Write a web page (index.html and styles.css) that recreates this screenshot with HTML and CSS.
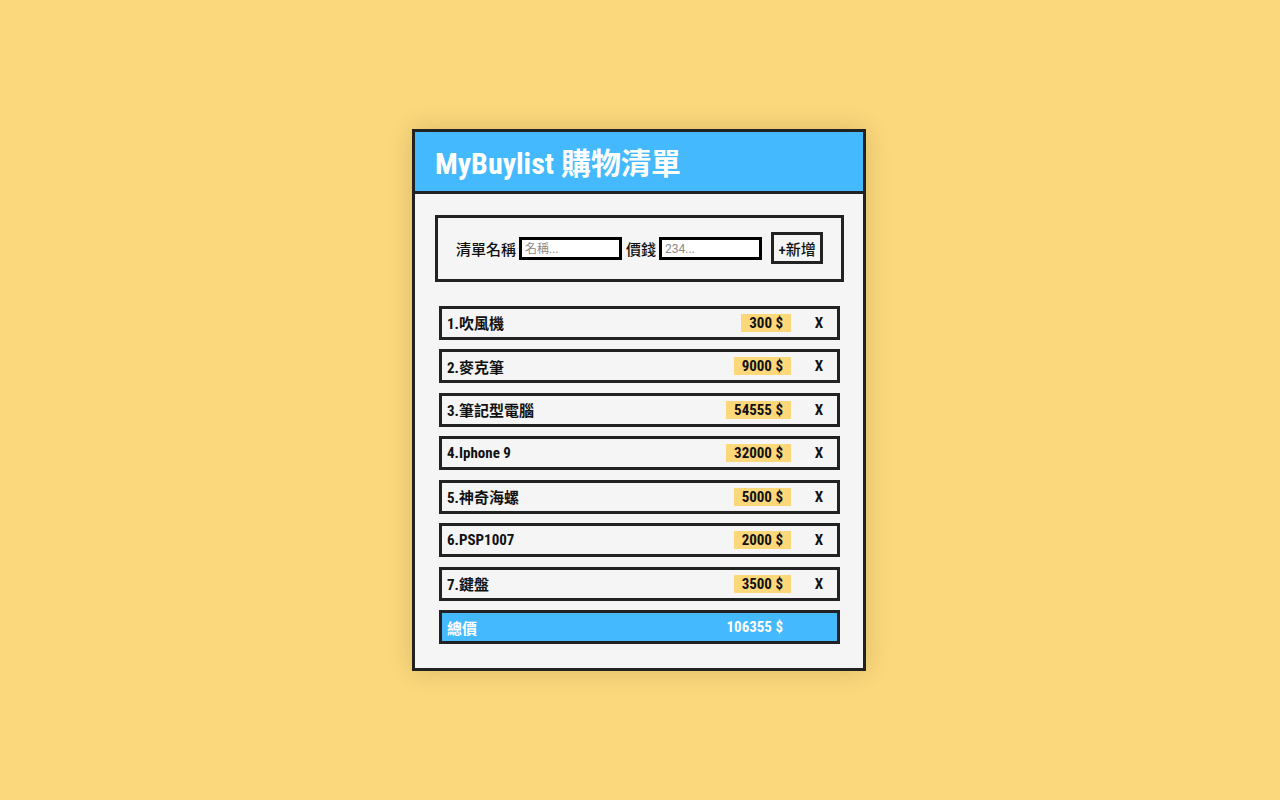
FILE: index.html
```html
<!DOCTYPE html>
<html lang="zh-Hant">
<head>
<meta charset="utf-8">
<title>MyBuylist 購物清單</title>
<link rel="stylesheet" href="styles.css">
</head>
<body>
<div class="stage">
  <div class="card">
    <header class="card-head">
      <h1 class="title">MyBuylist 購物清單</h1>
    </header>
    <main class="card-body">
      <form class="add-form">
        <label class="field-label">清單名稱</label>
        <input class="field-input" type="text" placeholder="名稱...">
        <label class="field-label">價錢</label>
        <input class="field-input" type="text" placeholder="234...">
        <button class="add-btn" type="button">+新增</button>
      </form>
      <ul class="items">
        <li class="item"><span class="item-name">1.吹風機</span><span class="price">300 $</span><span class="remove">X</span></li>
        <li class="item"><span class="item-name">2.麥克筆</span><span class="price">9000 $</span><span class="remove">X</span></li>
        <li class="item"><span class="item-name">3.筆記型電腦</span><span class="price">54555 $</span><span class="remove">X</span></li>
        <li class="item"><span class="item-name">4.Iphone 9</span><span class="price">32000 $</span><span class="remove">X</span></li>
        <li class="item"><span class="item-name">5.神奇海螺</span><span class="price">5000 $</span><span class="remove">X</span></li>
        <li class="item"><span class="item-name">6.PSP1007</span><span class="price">2000 $</span><span class="remove">X</span></li>
        <li class="item"><span class="item-name">7.鍵盤</span><span class="price">3500 $</span><span class="remove">X</span></li>
        <li class="item total"><span class="item-name">總價</span><span class="price">106355 $</span><span class="remove"></span></li>
      </ul>
    </main>
  </div>
</div>
</body>
</html>
```

FILE: styles.css
```css
* { box-sizing: border-box; }
html, body { margin: 0; padding: 0; }
body {
  background: #fbd87c;
  font-family: "Roboto Condensed", "Liberation Sans Narrow", Roboto, "Noto Sans CJK TC", sans-serif;
  color: #111;
}
.stage {
  height: 100vh;
  display: flex;
  align-items: center;
  justify-content: center;
}
.card {
  width: 454px;
  border: 3px solid #222;
  background: #f5f5f5;
  box-shadow: 0 0 24px rgba(0, 0, 0, 0.14);
  margin-left: -2px;
}
.card-head {
  background: #44b9fd;
  border-bottom: 3px solid #222;
  height: 62px;
  display: flex;
  align-items: center;
  padding-left: 20px;
}
.title {
  margin: 0;
  color: #fff;
  font-size: 30px;
  font-weight: 700;
  letter-spacing: 0;
}
.card-body {
  padding: 21px 19px 24px 20px;
}
.add-form {
  border: 3px solid #222;
  height: 67px;
  display: flex;
  align-items: center;
  justify-content: center;
  font-size: 15px;
  font-weight: 500;
}
.field-label {
  margin-right: 3px;
}
.field-input {
  width: 103px;
  height: 23px;
  border: 3px solid #000;
  background: #fff;
  padding: 2px 3px 0;
  font-family: Roboto, "Noto Sans CJK TC", sans-serif;
  font-size: 12px;
  margin-right: 4px;
  outline: none;
}
.field-input::placeholder { color: #8a8a8a; }
.add-btn {
  margin-left: 5px;
  width: 52px;
  height: 32px;
  border: 3px solid #222;
  background: #f5f5f5;
  font-family: inherit;
  font-size: 15px;
  font-weight: 500;
  color: #111;
  padding: 0;
}
.items {
  list-style: none;
  margin: 24px 4px 0 4px;
  padding: 0;
  display: flex;
  flex-direction: column;
  gap: 9.5px;
}
.item {
  border: 3px solid #222;
  height: 34px;
  display: flex;
  align-items: center;
  padding-left: 5px;
  font-size: 15px;
  font-weight: 700;
}
.item-name {
  flex: 1;
}
.price {
  background: #fcd87a;
  padding: 0 8px;
  height: 18px;
  line-height: 18px;
}
.remove {
  width: 36px;
  margin-left: 10px;
  text-align: center;
}
.total {
  background: #44b9fd;
  color: #fff;
}
.total .price {
  background: transparent;
  padding-right: 7px;
  margin-right: 1px;
}
```
